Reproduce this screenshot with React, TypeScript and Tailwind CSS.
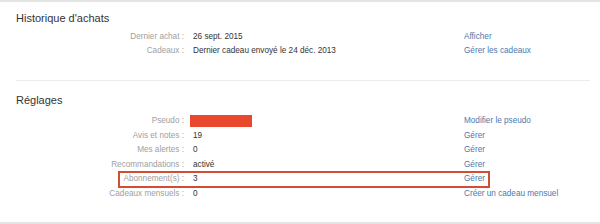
import React from 'react';

type Row = {
  label: string;
  value?: string;
  link: string;
  redacted?: boolean;
  highlight?: boolean;
};

const PURCHASES: Row[] = [
  { label: 'Dernier achat :', value: '26 sept. 2015', link: 'Afficher' },
  { label: 'Cadeaux :', value: 'Dernier cadeau envoyé le 24 déc. 2013', link: 'Gérer les cadeaux' },
];

const SETTINGS: Row[] = [
  { label: 'Pseudo :', link: 'Modifier le pseudo', redacted: true },
  { label: 'Avis et notes :', value: '19', link: 'Gérer' },
  { label: 'Mes alertes :', value: '0', link: 'Gérer' },
  { label: 'Recommandations :', value: 'activé', link: 'Gérer' },
  { label: 'Abonnement(s) :', value: '3', link: 'Gérer', highlight: true },
  { label: 'Cadeaux mensuels :', value: '0', link: 'Créer un cadeau mensuel' },
];

const InfoRow: React.FC<{ row: Row }> = ({ row }) => (
  <div
    className={`relative grid grid-cols-[168px_262px_1fr] gap-x-[9px] items-center text-[8.2px] ${
      row.redacted ? 'h-[16px]' : 'h-[14.5px]'
    }`}
  >
    <span className="text-right text-[#a0a0a0] whitespace-nowrap">{row.label}</span>
    <span className="text-[#333333] whitespace-nowrap">
      {row.redacted ? (
        <span className="block w-[62px] h-[12px] -ml-[3px] bg-[#e9472e]" />
      ) : (
        row.value
      )}
    </span>
    <a className="text-[#4c78ad] whitespace-nowrap cursor-pointer">{row.link}</a>

    {/* red highlight frame */}
    {row.highlight && (
      <div className="absolute left-[102px] -top-[1.5px] w-[372px] h-[17px] border-[2.5px] border-[#d24d33] pointer-events-none" />
    )}
  </div>
);

export default function App() {
  return (
    <div
      className="w-[600px] h-[224px] bg-white overflow-hidden flex flex-col"
      style={{ fontFamily: '"Liberation Sans", Arial, sans-serif' }}
    >
      <div className="h-[2px] bg-[#e4e4e4]" />

      {/* Historique d'achats */}
      <div className="pl-[16px] pr-[10px]">
        <h2 className="mt-[9.5px] text-[11px] leading-[13px] text-[#333333]">Historique d'achats</h2>
        <div className="mt-[5.25px]">
          {PURCHASES.map((r) => (
            <InfoRow key={r.label} row={r} />
          ))}
        </div>
        <div className="mt-[21px] h-px bg-[#ececec]" />
      </div>

      {/* Réglages */}
      <div className="pl-[16px] pr-[10px]">
        <h2 className="mt-[13.5px] text-[11px] leading-[13px] text-[#333333]">Réglages</h2>
        <div className="mt-[5.5px]">
          {SETTINGS.map((r) => (
            <InfoRow key={r.label} row={r} />
          ))}
        </div>
      </div>

      <div className="mt-auto h-[2px] bg-[#e4e4e4]" />
    </div>
  );
}
